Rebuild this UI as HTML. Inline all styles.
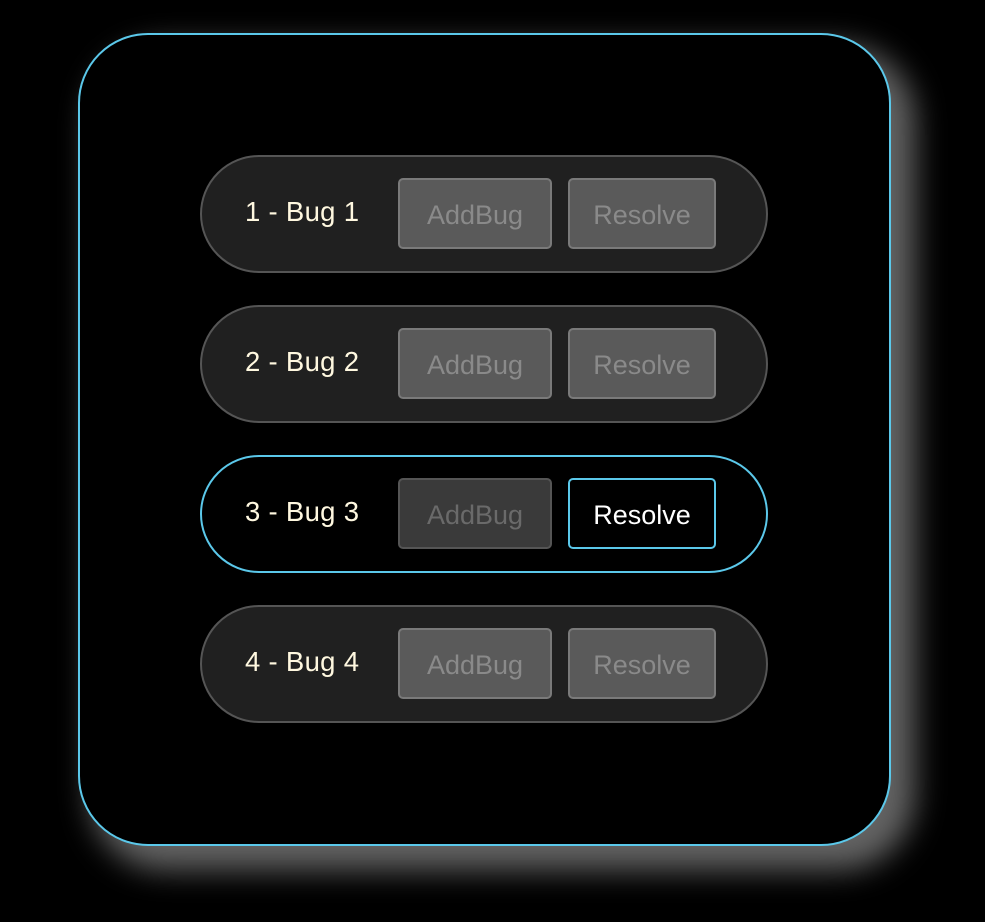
<!DOCTYPE html>
<html><head><style>
html,body{margin:0;padding:0;background:#000;width:985px;height:922px;overflow:hidden;font-family:"Liberation Sans",sans-serif}
.card{position:absolute;left:78px;top:33px;width:809px;height:809px;border:2px solid #5bc8ea;border-radius:70px;background:#000;box-shadow:18px 18px 30px 6px rgba(110,110,110,.9)}
.row{position:absolute;left:200px;width:564px;height:114px;border:2px solid #555;border-radius:59px;background:#202020}
.lbl{position:absolute;left:43px;top:39px;color:#fff8e0;font-size:27.5px;white-space:nowrap;letter-spacing:.3px}
.b{position:absolute;top:21px;border:2px solid #7a7a7a;border-radius:5px;background:#5a5a5a;color:#8a8a8a;font-size:27px;text-align:center;line-height:71px;box-sizing:border-box;height:71px}
.a{left:196px;width:154px}.r{left:366px;width:148px}
.sel{background:#000;border-color:#5bc8ea}
.sel .a{background:#3a3a3a;border-color:#555;color:#6a6a6a}
.sel .r{background:#000;border:2px solid #5bc8ea;color:#fff}
</style></head><body>
<div class="card"></div>
<div class="row" style="top:155px"><div class="lbl">1 - Bug 1</div><div class="b a">AddBug</div><div class="b r">Resolve</div></div>
<div class="row" style="top:305px"><div class="lbl">2 - Bug 2</div><div class="b a">AddBug</div><div class="b r">Resolve</div></div>
<div class="row sel" style="top:455px"><div class="lbl">3 - Bug 3</div><div class="b a">AddBug</div><div class="b r">Resolve</div></div>
<div class="row" style="top:605px"><div class="lbl">4 - Bug 4</div><div class="b a">AddBug</div><div class="b r">Resolve</div></div>
</body></html>
